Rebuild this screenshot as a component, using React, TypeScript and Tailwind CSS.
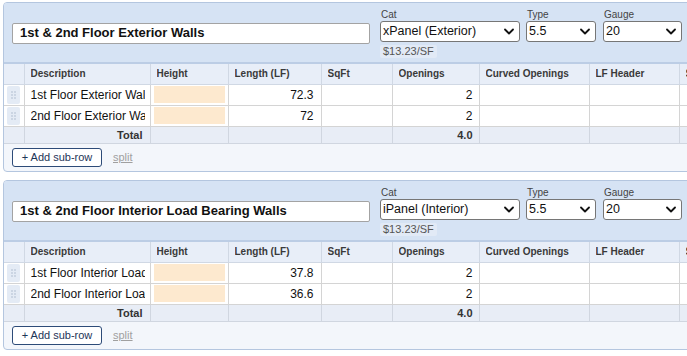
import React from 'react';

interface Row { desc: string; length: string; openings: string; }
interface Group { title: string; cat: string; rows: Row[]; total: string; }

const groups: Group[] = [
    {
        title: '1st & 2nd Floor Exterior Walls',
        cat: 'xPanel (Exterior)',
        rows: [
            { desc: '1st Floor Exterior Walls', length: '72.3', openings: '2' },
            { desc: '2nd Floor Exterior Walls', length: '72', openings: '2' },
        ],
        total: '4.0',
    },
    {
        title: '1st & 2nd Floor Interior Load Bearing Walls',
        cat: 'iPanel (Interior)',
        rows: [
            { desc: '1st Floor Interior Load Bearing', length: '37.8', openings: '2' },
            { desc: '2nd Floor Interior Load Bearing', length: '36.6', openings: '2' },
        ],
        total: '4.0',
    },
];

const cols = ['', 'Description', 'Height', 'Length (LF)', 'SqFt', 'Openings', 'Curved Openings', 'LF Header', 'Studs'];
const widths = ['w-[20px]', 'w-[126px]', 'w-[78px]', 'w-[93px]', 'w-[71px]', 'w-[87px]', 'w-[110px]', 'w-[90px]', 'w-[90px]'];

function Chevron() {
    return (
        <svg width="10" height="7" viewBox="0 0 10 7" className="shrink-0">
            <path d="M1 1.5 L5 5.5 L9 1.5" fill="none" stroke="#111" strokeWidth="1.8" strokeLinecap="round" strokeLinejoin="round" />
        </svg>
    );
}

function FakeSelect({ value, width }: { value: string; width: string }) {
    return (
        <div className={`${width} h-[21px] flex items-center justify-between rounded-[3px] border border-[#767676] bg-white pl-[2px] pr-[5px] text-[12.5px] text-[#111]`}>
            <span>{value}</span>
            <Chevron />
        </div>
    );
}

function Grip() {
    return (
        <div className="mx-auto flex h-[18px] w-[13px] items-center justify-center rounded-[2px] bg-[#e4ebf5]">
            <svg width="5" height="8" viewBox="0 0 5 8">
                {[1, 4, 7].map(y => (
                    <g key={y}>
                        <circle cx="1" cy={y} r="0.7" fill="#9fb0c6" />
                        <circle cx="4" cy={y} r="0.7" fill="#9fb0c6" />
                    </g>
                ))}
            </svg>
        </div>
    );
}

function Card({ g }: { g: Group }) {
    return (
        <div className="w-[820px] overflow-hidden rounded-[4px] border border-[#b4c6df] bg-[#f3f6fb]">
            {/* header */}
            <div className="flex h-[61px] items-center gap-[10px] border-b-2 border-[#bccde5] bg-[#d6e3f4] pl-[8px] pt-[1px]">
                <div className="flex h-[21px] w-[358px] items-center rounded-[2px] border border-[#a3a3a3] bg-white pl-[7px] text-[13px] font-bold text-[#111]">
                    {g.title}
                </div>
                <div className="flex flex-col">
                    <div className="flex gap-[6px]">
                        <div className="flex flex-col">
                            <span className="pl-[1px] text-[10px] leading-[12px] text-[#444]">Cat</span>
                            <FakeSelect value={g.cat} width="w-[140px]" />
                        </div>
                        <div className="flex flex-col">
                            <span className="pl-[1px] text-[10px] leading-[12px] text-[#444]">Type</span>
                            <FakeSelect value="5.5" width="w-[70px]" />
                        </div>
                        <div className="flex flex-col pl-[1px]">
                            <span className="pl-[1px] text-[10px] leading-[12px] text-[#444]">Gauge</span>
                            <FakeSelect value="20" width="w-[79px]" />
                        </div>
                    </div>
                    <div className="mt-[3px] self-start rounded-[2px] bg-[#e2eaf6] px-[3px] text-[11px] leading-[13px] text-[#555]">
                        $13.23/SF
                    </div>
                </div>
            </div>

            {/* table */}
            <table className="w-[765px] table-fixed border-collapse text-[12px] text-[#111]">
                <colgroup>
                    {widths.map((w, i) => <col key={i} className={w} />)}
                </colgroup>
                <thead>
                    <tr className="h-[20px] bg-[#e8eef8]">
                        {cols.map((c, i) => (
                            <th key={i} className="border-x border-b border-[#d0d8e4] px-[6px] text-left text-[10px] font-bold text-[#3a3a3a] first:border-l-0">
                                <div className="overflow-hidden whitespace-nowrap">{c}</div>
                            </th>
                        ))}
                    </tr>
                </thead>
                <tbody>
                    {g.rows.map((r, i) => (
                        <tr key={i} className="h-[21px]">
                            <td className="border-b border-r border-[#d4d4d4] bg-white"><Grip /></td>
                            <td className="border border-[#d4d4d4] bg-white pl-[6px] pr-[5px]">
                                <div className="overflow-hidden whitespace-nowrap">{r.desc}</div>
                            </td>
                            <td className="border border-[#d4d4d4] bg-white px-[3px]">
                                <div className="h-[17px] bg-[#fde9cf]" />
                            </td>
                            <td className="border border-[#d4d4d4] bg-white pr-[7px] text-right">{r.length}</td>
                            <td className="border border-[#d4d4d4] bg-white"></td>
                            <td className="border border-[#d4d4d4] bg-white pr-[6px] text-right">{r.openings}</td>
                            <td className="border border-[#d4d4d4] bg-white"></td>
                            <td className="border border-[#d4d4d4] bg-white"></td>
                            <td className="border border-[#d4d4d4] bg-white"></td>
                        </tr>
                    ))}
                    <tr className="h-[17px] bg-[#e8edf6] text-[11px] font-bold text-[#333]">
                        <td className="border-b border-r border-[#d0d6e0]"></td>
                        <td className="border border-[#d0d6e0] pr-[7px] text-right">Total</td>
                        <td className="border border-[#d0d6e0]"></td>
                        <td className="border border-[#d0d6e0]"></td>
                        <td className="border border-[#d0d6e0]"></td>
                        <td className="border border-[#d0d6e0] pr-[6px] text-right">{g.total}</td>
                        <td className="border border-[#d0d6e0]"></td>
                        <td className="border border-[#d0d6e0]"></td>
                        <td className="border border-[#d0d6e0]"></td>
                    </tr>
                </tbody>
            </table>

            {/* footer */}
            <div className="flex items-center gap-[11px] px-[8px] pt-[4px] pb-[4px]">
                <button className="h-[19px] w-[90px] rounded-[3px] border border-[#2d4b78] bg-white text-[11px] leading-none text-[#1d3557]">
                    + Add sub-row
                </button>
                <span className="text-[11px] text-[#a0a0a0] underline">split</span>
            </div>
        </div>
    );
}

export default function App() {
    return (
        <div className="h-[356px] w-[687px] overflow-hidden bg-white font-['Liberation_Sans',Arial,sans-serif]">
            <div className="flex flex-col gap-[8px] pl-[3px] pt-[2px]">
                {groups.map((g, i) => <Card key={i} g={g} />)}
            </div>
        </div>
    );
}
